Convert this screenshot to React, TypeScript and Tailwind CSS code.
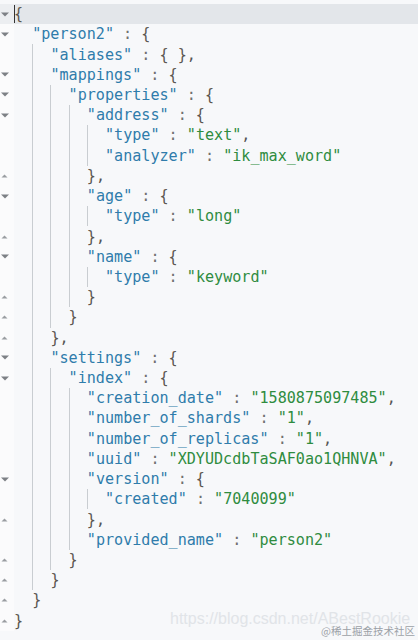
import React from "react";

type Fold = "down" | "up" | null;
type Line = { indent: number; text: string; fold: Fold };

const lines: Line[] = [
  { indent: 0, text: "{", fold: "down" },
  { indent: 2, text: '"person2" : {', fold: "down" },
  { indent: 4, text: '"aliases" : { },', fold: null },
  { indent: 4, text: '"mappings" : {', fold: "down" },
  { indent: 6, text: '"properties" : {', fold: "down" },
  { indent: 8, text: '"address" : {', fold: "down" },
  { indent: 10, text: '"type" : "text",', fold: null },
  { indent: 10, text: '"analyzer" : "ik_max_word"', fold: null },
  { indent: 8, text: "},", fold: "up" },
  { indent: 8, text: '"age" : {', fold: "down" },
  { indent: 10, text: '"type" : "long"', fold: null },
  { indent: 8, text: "},", fold: "up" },
  { indent: 8, text: '"name" : {', fold: "down" },
  { indent: 10, text: '"type" : "keyword"', fold: null },
  { indent: 8, text: "}", fold: "up" },
  { indent: 6, text: "}", fold: "up" },
  { indent: 4, text: "},", fold: "up" },
  { indent: 4, text: '"settings" : {', fold: "down" },
  { indent: 6, text: '"index" : {', fold: "down" },
  { indent: 8, text: '"creation_date" : "1580875097485",', fold: null },
  { indent: 8, text: '"number_of_shards" : "1",', fold: null },
  { indent: 8, text: '"number_of_replicas" : "1",', fold: null },
  { indent: 8, text: '"uuid" : "XDYUDcdbTaSAF0ao1QHNVA",', fold: null },
  { indent: 8, text: '"version" : {', fold: "down" },
  { indent: 10, text: '"created" : "7040099"', fold: null },
  { indent: 8, text: "},", fold: "up" },
  { indent: 8, text: '"provided_name" : "person2"', fold: null },
  { indent: 6, text: "}", fold: "up" },
  { indent: 4, text: "}", fold: "up" },
  { indent: 2, text: "}", fold: "up" },
  { indent: 0, text: "}", fold: "up" },
];

const CW = 9.1;

function tokenize(text: string) {
  const parts: { t: string; c: string }[] = [];
  const re = /("[^"]*")|(\s*:\s*)|([{}\[\]])|(,)|(\s+)/g;
  let m: RegExpExecArray | null;
  let last = 0;
  let seenColon = false;
  while ((m = re.exec(text))) {
    if (m.index > last) parts.push({ t: text.slice(last, m.index), c: "text-[#555]" });
    if (m[1]) {
      parts.push({ t: m[1], c: seenColon ? "text-[#2f8c3f]" : "text-[#2f7cab]" });
    } else if (m[2]) {
      seenColon = true;
      parts.push({ t: m[2], c: "text-[#707070]" });
    } else if (m[3]) {
      parts.push({ t: m[3], c: "text-[#5b5650]" });
    } else if (m[4]) {
      parts.push({ t: m[4], c: "text-[#555]" });
    } else {
      parts.push({ t: m[0], c: "" });
    }
    last = re.lastIndex;
  }
  if (last < text.length) parts.push({ t: text.slice(last), c: "text-[#555]" });
  return parts;
}

function FoldIcon({ kind }: { kind: Fold }) {
  if (kind === "down")
    return (
      <svg width="8" height="5" viewBox="0 0 8 5">
        <polygon points="0,0.5 8,0.5 4,4.5" fill="#7d8085" />
      </svg>
    );
  if (kind === "up")
    return (
      <svg width="7" height="4" viewBox="0 0 7 4">
        <polygon points="0.5,3.5 6.5,3.5 3.5,0.5" fill="#9a9da1" />
      </svg>
    );
  return null;
}

export default function App() {
  return (
    <div className="relative w-[418px] h-[640px] overflow-hidden bg-[#f7f8fa]">
      <div className="flex flex-col pt-[4px]">
        {lines.map((ln, i) => {
          const guides: number[] = [];
          for (let g = 2; g < ln.indent; g += 2) guides.push(g);
          const active = i === 0;
          return (
            <div key={i} className="flex h-[20.23px]">
              <div
                className={`w-[14px] shrink-0 flex items-center pl-[1px] ${
                  active ? "bg-[#eceef1]" : "bg-[#fbfbfc]"
                }`}
              >
                <FoldIcon kind={ln.fold} />
              </div>
              <div
                className={`relative flex-1 flex items-center whitespace-pre text-[15.1px] leading-[20px] ${
                  active ? "bg-[#e3e6ea]" : ""
                }`}
                style={{ fontFamily: '"DejaVu Sans Mono", "Liberation Mono", monospace' }}
              >
                {guides.map((g) => (
                  <span
                    key={g}
                    className="absolute top-0 bottom-0 w-px bg-[#c9cdd1]"
                    style={{ left: g * CW }}
                  />
                ))}
                {active && <span className="absolute left-0 top-[1px] bottom-[1px] w-px bg-[#333]" />}
                <span style={{ paddingLeft: ln.indent * CW }}>
                  {tokenize(ln.text).map((p, j) => (
                    <span key={j} className={p.c}>
                      {p.t}
                    </span>
                  ))}
                </span>
              </div>
            </div>
          );
        })}
      </div>
      <div
        className="absolute left-[170px] top-[609px] text-[16px] leading-[20px] text-[#e1e4e8] whitespace-nowrap"
        style={{ fontFamily: '"Liberation Sans", Arial, sans-serif' }}
      >
        https://blog.csdn.net/ABestRookie
      </div>
      <div
        className="absolute right-[3px] top-[624px] text-[10.5px] leading-[14px] text-[#9ca1a7] whitespace-nowrap"
        style={{ fontFamily: '"Noto Sans CJK SC", sans-serif' }}
      >
        @稀土掘金技术社区
      </div>
    </div>
  );
}
